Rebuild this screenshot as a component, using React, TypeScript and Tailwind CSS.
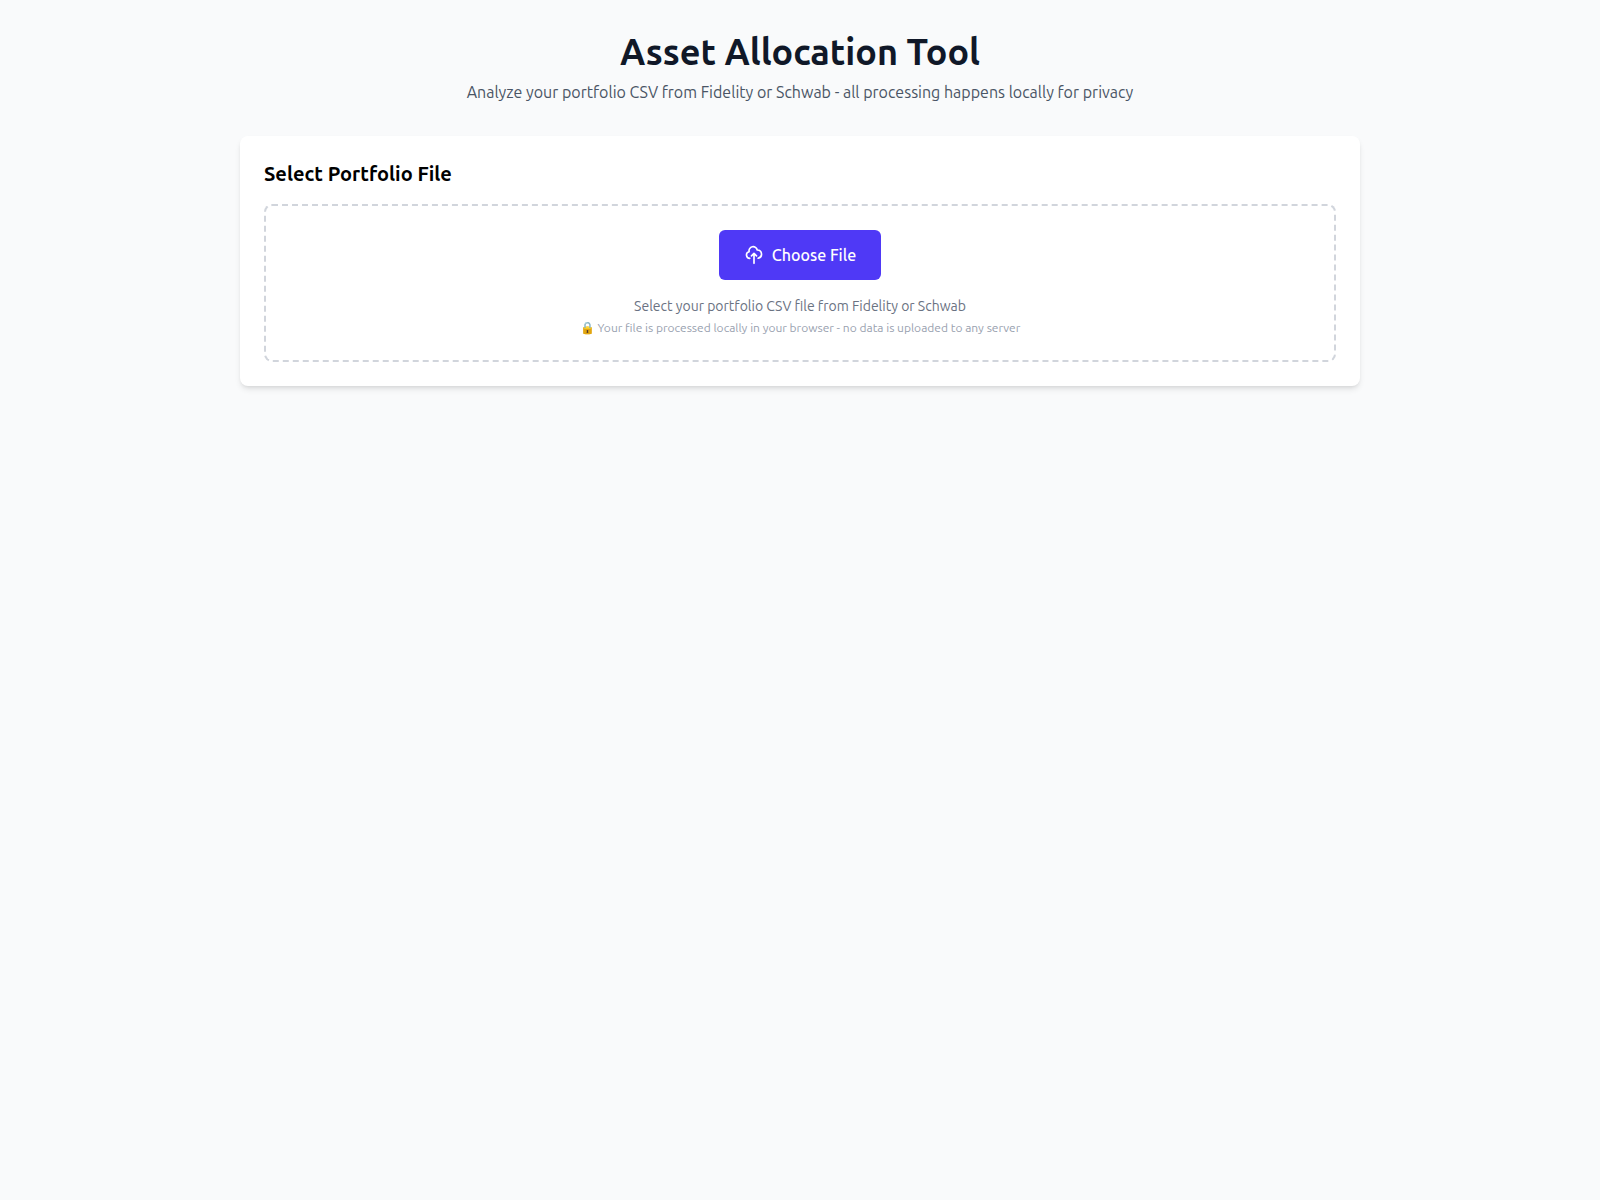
// Portfolio upload screen of the asset allocation tool
import { useRef, useState } from "react"

type FileUploadProps = {
  onSelect: (file: File) => void
}

function UploadIcon() {
  return (
    <svg className="w-5 h-5 mr-2" fill="none" stroke="currentColor" viewBox="0 0 24 24" aria-hidden="true">
      <path
        strokeLinecap="round"
        strokeLinejoin="round"
        strokeWidth={2}
        d="M7 16a4 4 0 01-.88-7.903A5 5 0 1115.9 6L16 6a5 5 0 011 9.9M15 13l-3-3m0 0l-3 3m3-3v12"
      />
    </svg>
  )
}

function FileUpload({ onSelect }: FileUploadProps) {
  const inputRef = useRef<HTMLInputElement>(null)

  return (
    <section className="bg-white rounded-lg shadow-md p-6">
      <h2 className="text-xl font-semibold text-black mb-4">Select Portfolio File</h2>
      <div className="border-2 border-dashed border-gray-300 rounded-lg p-6 text-center">
        <input
          ref={inputRef}
          type="file"
          accept=".csv"
          aria-label="Choose File"
          className="hidden"
          onChange={(e) => {
            const file = e.target.files?.[0]
            if (file) onSelect(file)
          }}
        />
        <button
          type="button"
          onClick={() => inputRef.current?.click()}
          className="inline-flex items-center px-6 py-3 border border-transparent text-base font-medium rounded-md text-white bg-indigo-600 hover:bg-indigo-700 cursor-pointer transition-colors"
        >
          <UploadIcon />
          Choose File
        </button>
        <p className="mt-4 text-sm text-gray-500">Select your portfolio CSV file from Fidelity or Schwab</p>
        <p className="mt-1 text-xs text-gray-400">
          🔒 Your file is processed locally in your browser - no data is uploaded to any server
        </p>
      </div>
    </section>
  )
}

export default function App() {
  const [file, setFile] = useState<File | null>(null)

  return (
    <div className="min-h-screen bg-gray-50 font-['Ubuntu','Liberation_Sans',sans-serif]">
      <main className="max-w-6xl mx-auto px-4 py-8">
        <header className="text-center mb-8">
          <h1 className="text-4xl font-bold text-gray-900 mb-2">Asset Allocation Tool</h1>
          <p className="text-gray-600">
            Analyze your portfolio CSV from Fidelity or Schwab - all processing happens locally for privacy
          </p>
        </header>
        <FileUpload onSelect={setFile} />
        {file && <p className="mt-4 text-sm text-gray-600">{file.name}</p>}
      </main>
    </div>
  )
}
